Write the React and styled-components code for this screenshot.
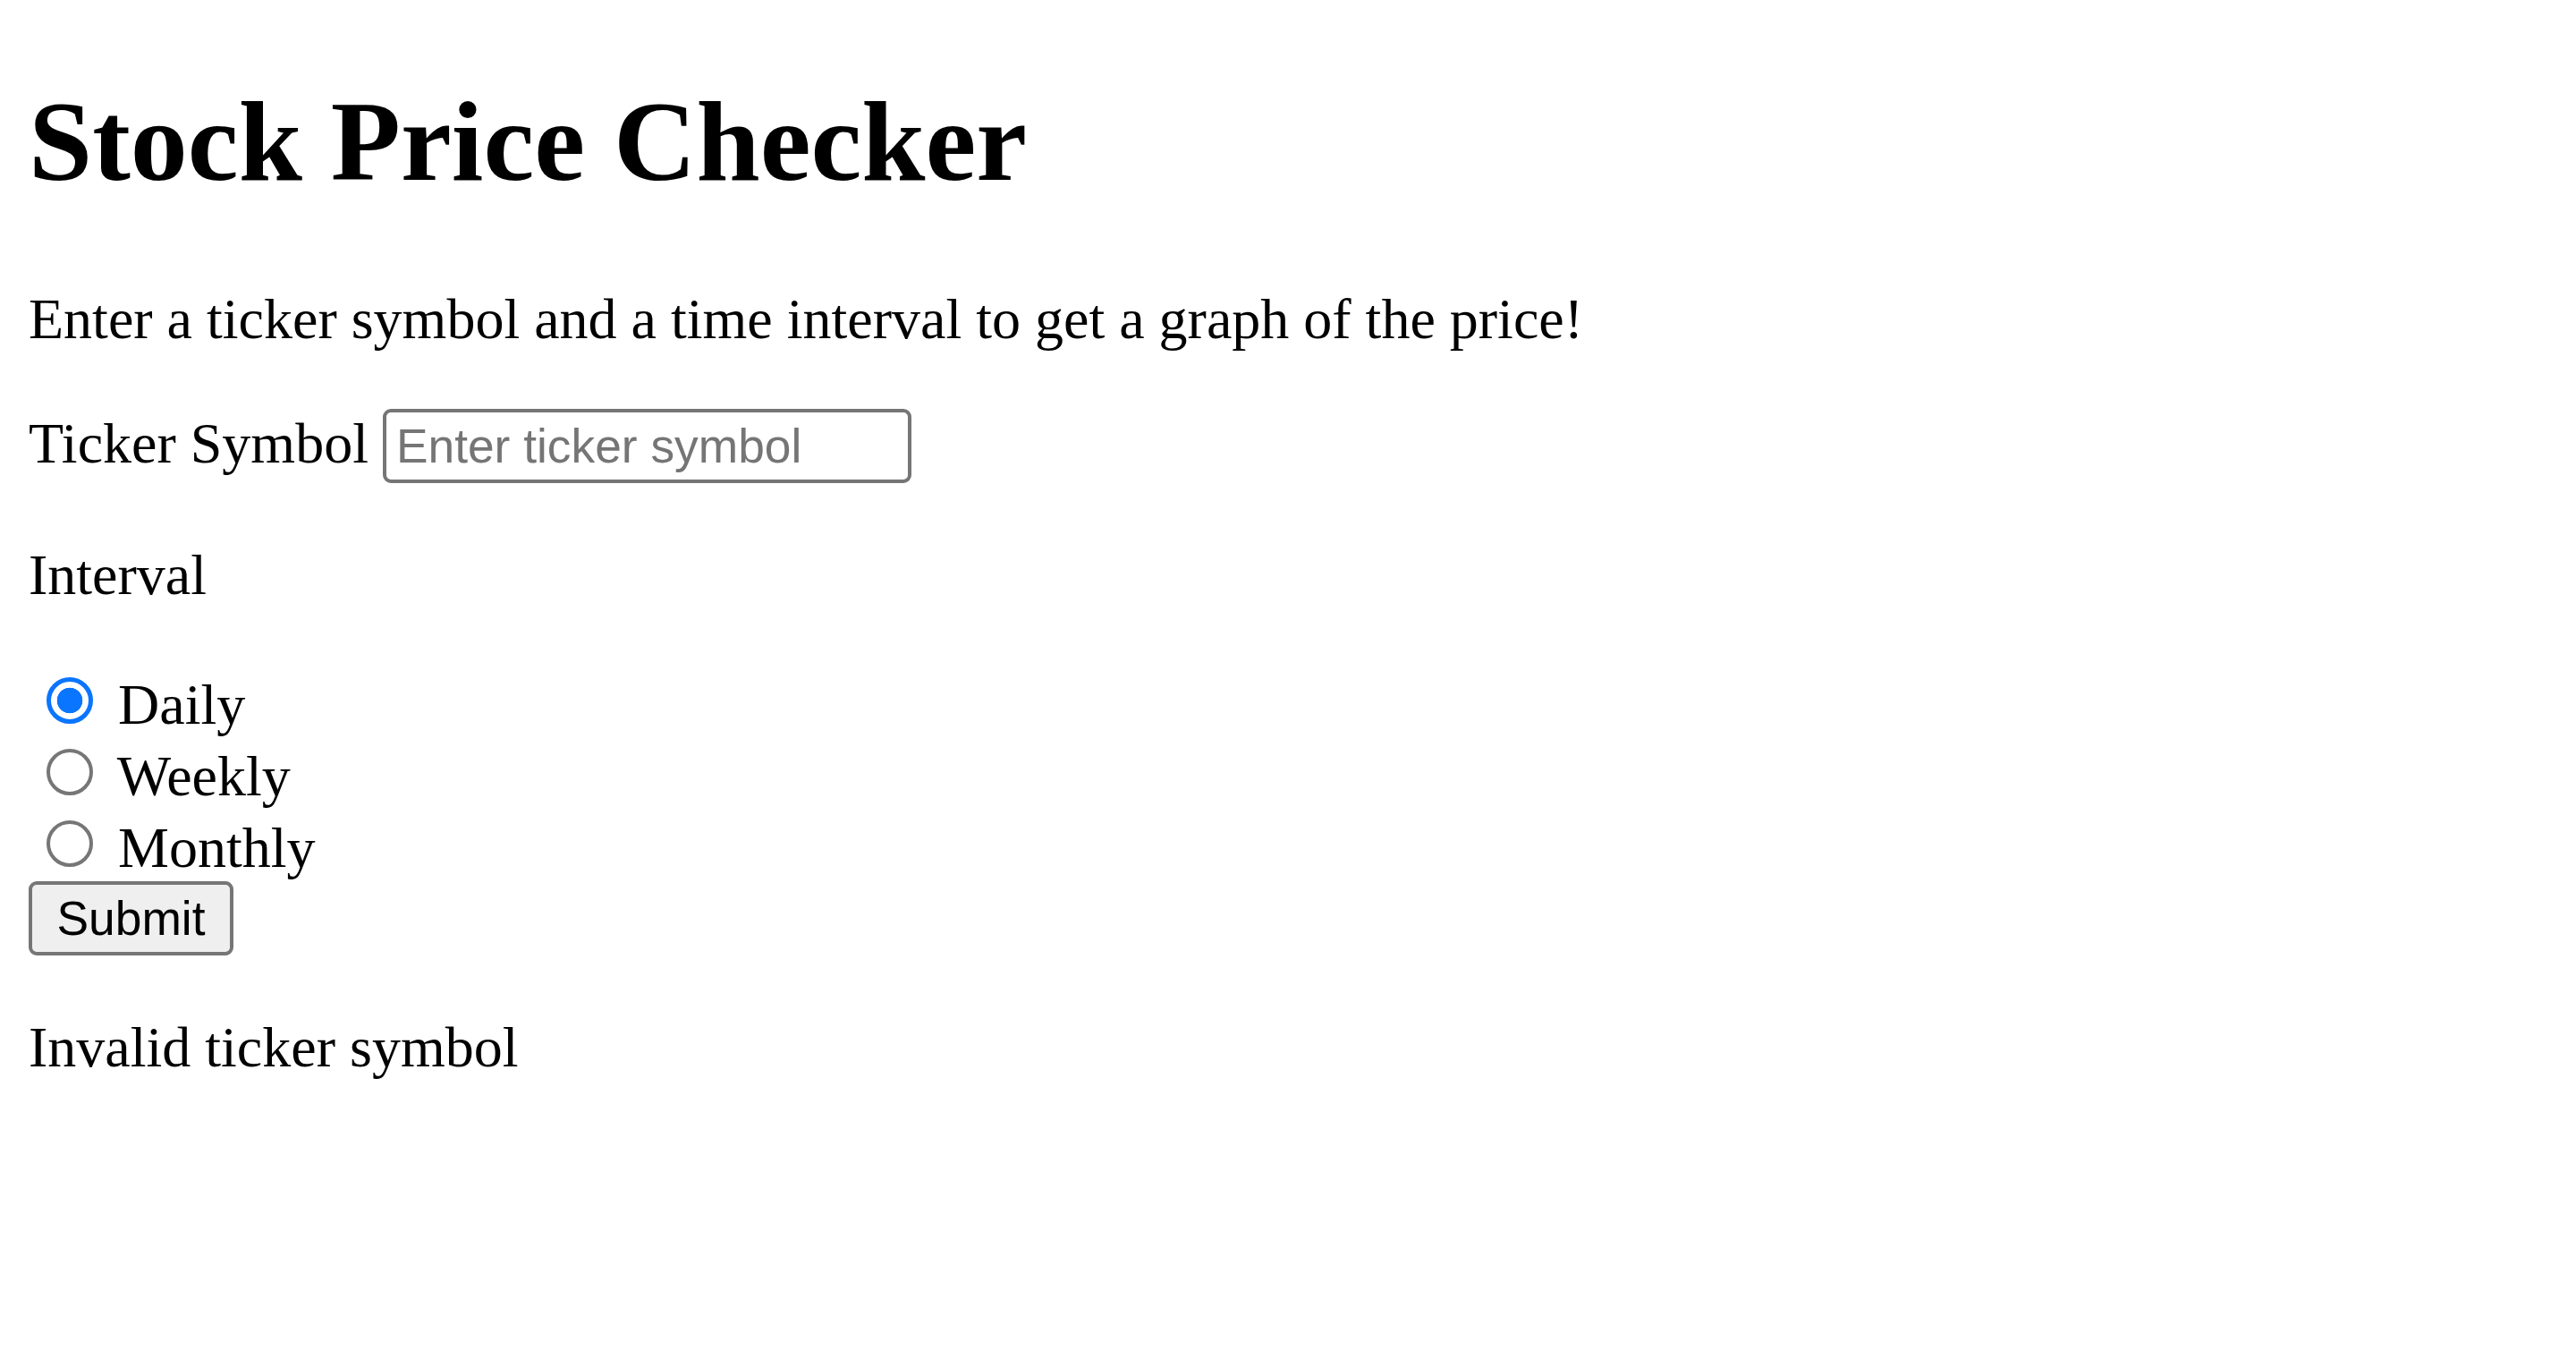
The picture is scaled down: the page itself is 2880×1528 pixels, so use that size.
import styled, { createGlobalStyle } from "styled-components";

// page reset, the picture is a plain html page at 4x
const GlobalStyle = createGlobalStyle`
  html, body {
    margin: 0;
    padding: 0;
    background: #fff;
  }
`;

const Page = styled.div`
  padding: 0 32px;
  font-family: "Liberation Serif", "Times New Roman", serif;
  font-size: 64px;
  color: #000;
`;

const Title = styled.h1`
  margin: 85px 0 0;
  font-size: 128px;
  font-weight: 700;
  line-height: 147px;
`;

// paragraph, $gap = space above
const Text = styled.p`
  margin: ${(p) => p.$gap}px 0 0;
  line-height: 78px;
`;

const FieldRow = styled.div`
  margin-top: 61px;
  line-height: 78px;
`;

const TickerInput = styled.input`
  box-sizing: border-box;
  width: 591px;
  height: 83px;
  margin: 0;
  padding: 0 11px;
  border: 4px solid #767676;
  border-radius: 9px;
  font-family: "Liberation Sans", Arial, sans-serif;
  font-size: 53.33px;
  color: #000;
  vertical-align: baseline;
  outline: none;

  &::placeholder {
    color: #757575;
  }
`;

const Options = styled.div`
  margin-top: 63px;
`;

const RadioRow = styled.div`
  line-height: 75px;
  height: 80px;
`;

// custom radio so it can be drawn at this size
const Radio = styled.input.attrs({ type: "radio" })`
  appearance: none;
  box-sizing: border-box;
  width: 52px;
  height: 52px;
  margin: 12px 12px 0 20px;
  border: 4px solid #767676;
  border-radius: 50%;
  background: #fff;
  vertical-align: baseline;

  &:checked {
    border: 5px solid #0a75ff;
    background: radial-gradient(circle, #0a75ff 0 14px, #fff 14.6px);
  }
`;

const ButtonRow = styled.div`
  padding-top: 0;
  line-height: 78px;
`;

const SubmitButton = styled.button`
  box-sizing: border-box;
  width: 229px;
  height: 83px;
  margin: 0;
  padding: 0;
  border: 4px solid #767676;
  border-radius: 9px;
  background: #efefef;
  font-family: "Liberation Sans", Arial, sans-serif;
  font-size: 53.33px;
  color: #000;
  vertical-align: baseline;
`;

const intervals = [
  { id: "daily", label: "Daily" },
  { id: "weekly", label: "Weekly" },
  { id: "monthly", label: "Monthly" },
];

export default function App() {
  return (
    <>
      <GlobalStyle />
      <Page>
        <Title>Stock Price Checker</Title>
        <Text $gap={86}>
          Enter a ticker symbol and a time interval to get a graph of the price!
        </Text>
        <FieldRow>
          <label htmlFor="ticker">Ticker Symbol</label>{" "}
          <TickerInput id="ticker" placeholder="Enter ticker symbol" />
        </FieldRow>
        <Text $gap={64}>Interval</Text>
        <Options>
          {intervals.map((item) => (
            <RadioRow key={item.id}>
              <Radio
                id={item.id}
                name="interval"
                defaultChecked={item.id === "daily"}
              />{" "}
              <label htmlFor={item.id}>{item.label}</label>
            </RadioRow>
          ))}
        </Options>
        <ButtonRow>
          <SubmitButton>Submit</SubmitButton>
        </ButtonRow>
        <Text $gap={64}>Invalid ticker symbol</Text>
      </Page>
    </>
  );
}
